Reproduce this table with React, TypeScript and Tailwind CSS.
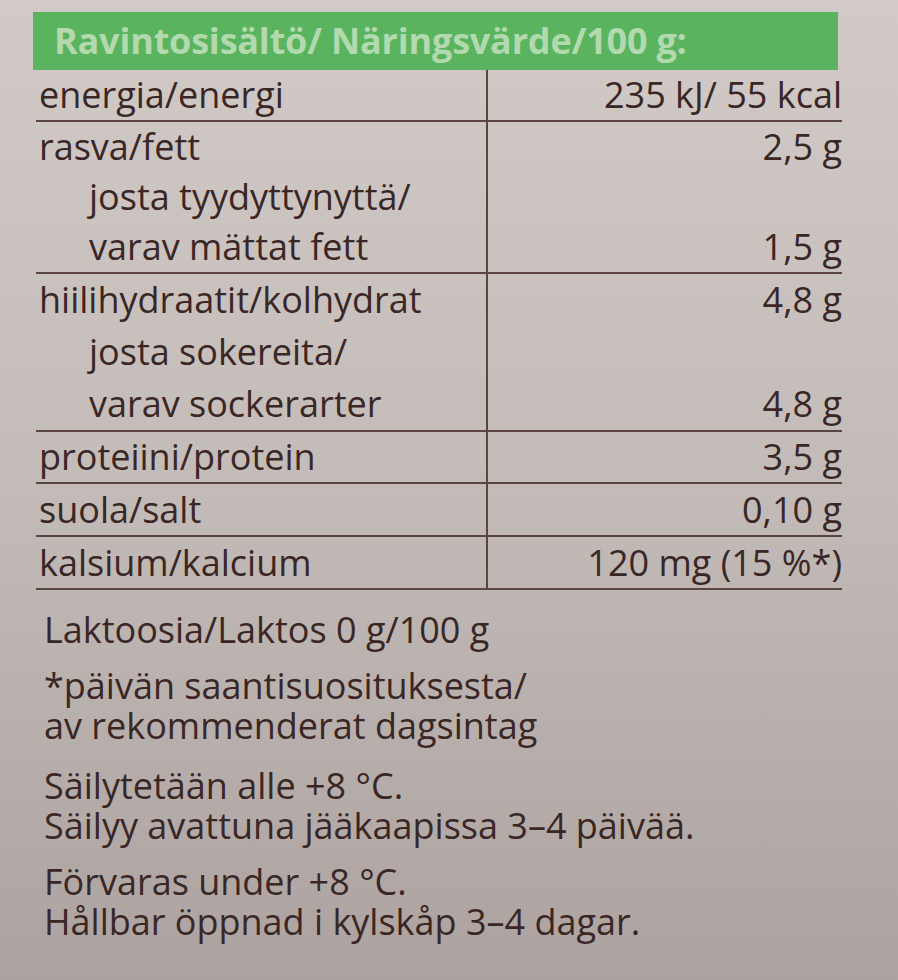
import React from "react";

type Line = { label: string; value?: string; indent?: boolean };

const rows: { lines: Line[]; lh: string }[] = [
  { lh: "leading-[50px]", lines: [{ label: "energia/energi", value: "235 kJ/ 55 kcal" }] },
  {
    lh: "leading-[50px]",
    lines: [
      { label: "rasva/fett", value: "2,5 g" },
      { label: "josta tyydyttynyttä/", indent: true },
      { label: "varav mättat fett", value: "1,5 g", indent: true },
    ],
  },
  {
    lh: "leading-[52px]",
    lines: [
      { label: "hiilihydraatit/kolhydrat", value: "4,8 g" },
      { label: "josta sokereita/", indent: true },
      { label: "varav sockerarter", value: "4,8 g", indent: true },
    ],
  },
  { lh: "leading-[50px]", lines: [{ label: "proteiini/protein", value: "3,5 g" }] },
  { lh: "leading-[51px]", lines: [{ label: "suola/salt", value: "0,10 g" }] },
  { lh: "leading-[51px]", lines: [{ label: "kalsium/kalcium", value: "120 mg (15 %*)" }] },
];

export default function App() {
  return (
    <div
      className="w-[898px] h-[980px] overflow-hidden bg-linear-to-b from-[#d1cac7] via-[#c3bbb8] to-[#aca3a0] text-[#3a2725] text-[36px] font-medium"
      style={{ fontFamily: '"Open Sans", "Noto Sans", sans-serif' }}
    >
      <div className="pt-[12px] pl-[33px] w-[838px]">
        <div className="h-[58px] bg-[#5ab45f] flex items-center pl-[21px]">
          <span className="text-[#b3d9ae] font-bold text-[36px] tracking-[-0.2px]">
            Ravintosisältö/ Näringsvärde/100 g:
          </span>
        </div>
      </div>

      <div className="ml-[36px] w-[806px]">
        {rows.map((row, i) => (
          <div key={i} className="grid grid-cols-[452px_1fr] border-b-2 border-[#5a4541]">
            <div className={`border-r-2 border-[#5a4541] pl-[3px] ${row.lh}`}>
              {row.lines.map((l, j) => (
                <div key={j} className={l.indent ? "pl-[50px]" : ""}>
                  {l.label}
                </div>
              ))}
            </div>
            <div className={`text-right ${row.lh}`}>
              {row.lines.map((l, j) => (
                <div key={j}>{l.value ?? "\u00a0"}</div>
              ))}
            </div>
          </div>
        ))}
      </div>

      <div className="pl-[44px] pt-[20px] leading-[40px]">
        <p>Laktoosia/Laktos 0 g/100 g</p>
        <p className="mt-[16px]">
          *päivän saantisuosituksesta/
          <br />
          av rekommenderat dagsintag
        </p>
        <p className="mt-[20px]">
          Säilytetään alle +8 °C.
          <br />
          Säilyy avattuna jääkaapissa 3–4 päivää.
        </p>
        <p className="mt-[16px]">
          Förvaras under +8 °C.
          <br />
          Hållbar öppnad i kylskåp 3–4 dagar.
        </p>
      </div>
    </div>
  );
}
